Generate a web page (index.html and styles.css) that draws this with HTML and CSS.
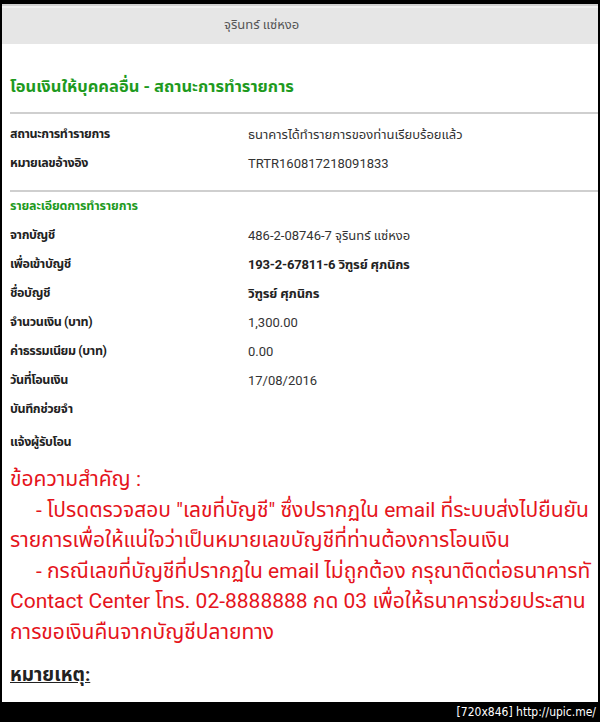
FILE: index.html
```html
<!DOCTYPE html>
<html lang="th">
<head>
<meta charset="utf-8">
<link rel="stylesheet" href="styles.css">
</head>
<body>
<div class="frame">
  <div class="topbar">
    <div class="topbar-title">จุรินทร์ แซ่หงอ</div>
  </div>
  <div class="content">
    <h1 class="page-title">โอนเงินให้บุคคลอื่น - สถานะการทำรายการ</h1>
    <div class="rule"></div>
    <div class="rows first">
      <div class="row"><span class="label">สถานะการทำรายการ</span><span class="value">ธนาคารได้ทำรายการของท่านเรียบร้อยแล้ว</span></div>
      <div class="row"><span class="label">หมายเลขอ้างอิง</span><span class="value">TRTR160817218091833</span></div>
    </div>
    <div class="rule"></div>
    <h2 class="section-title">รายละเอียดการทำรายการ</h2>
    <div class="rows">
      <div class="row"><span class="label">จากบัญชี</span><span class="value">486-2-08746-7 จุรินทร์ แซ่หงอ</span></div>
      <div class="row"><span class="label">เพื่อเข้าบัญชี</span><span class="value strong">193-2-67811-6 วิฑูรย์ ศุภนิกร</span></div>
      <div class="row"><span class="label">ชื่อบัญชี</span><span class="value strong">วิฑูรย์ ศุภนิกร</span></div>
      <div class="row"><span class="label">จำนวนเงิน (บาท)</span><span class="value">1,300.00</span></div>
      <div class="row"><span class="label">ค่าธรรมเนียม (บาท)</span><span class="value">0.00</span></div>
      <div class="row"><span class="label">วันที่โอนเงิน</span><span class="value">17/08/2016</span></div>
      <div class="row"><span class="label">บันทึกช่วยจำ</span><span class="value"></span></div>
      <div class="row tall"><span class="label">แจ้งผู้รับโอน</span><span class="value"></span></div>
    </div>
    <div class="notice">
      <p>ข้อความสำคัญ :</p>
      <p class="indent">- โปรดตรวจสอบ "เลขที่บัญชี" ซึ่งปรากฏใน email ที่ระบบส่งไปยืนยัน</p>
      <p>รายการเพื่อให้แน่ใจว่าเป็นหมายเลขบัญชีที่ท่านต้องการโอนเงิน</p>
      <p class="indent">- กรณีเลขที่บัญชีที่ปรากฏใน email ไม่ถูกต้อง กรุณาติดต่อธนาคารทั</p>
      <p>Contact Center โทร. 02-8888888 กด 03 เพื่อให้ธนาคารช่วยประสาน</p>
      <p>การขอเงินคืนจากบัญชีปลายทาง</p>
    </div>
    <div class="remark">หมายเหตุ:</div>
  </div>
</div>
<div class="footer">[720x846] http://upic.me/</div>
</body>
</html>
```
FILE: styles.css
```css
html, body {
  margin: 0;
  padding: 0;
  background: #000;
  width: 600px;
  height: 722px;
  overflow: hidden;
}
body {
  font-family: "Roboto", "Noto Sans", "Noto Sans Thai", sans-serif;
  color: #222;
}
.frame {
  margin: 4px 2px 0 2px;
  height: 698px;
  background: #fff;
  overflow: hidden;
}
.topbar {
  display: flex;
  height: 38px;
  background: #e6e6e6;
  border-top: 2px solid #d0d0d0;
  box-shadow: inset 0 2px 0 #f0f0f0;
  align-items: center;
}
.topbar-title {
  padding-left: 222px;
  font-size: 13px;
  color: #555;
}
.content {
  padding-left: 8px;
}
.page-title {
  margin: 30px 0 0 0;
  font-size: 16.5px;
  font-weight: bold;
  color: #1e9a1e;
  line-height: 26px;
}
.rule {
  height: 2px;
  background: #cfcfcf;
  margin-top: 12px;
}
.rows.first {
  padding: 6px 0 0;
}
.row {
  display: flex;
  height: 29px;
  align-items: center;
  font-size: 13px;
}
.row.tall {
  height: 36px;
}
.label {
  width: 238px;
  flex: none;
  font-size: 12.5px;
  font-weight: bold;
  letter-spacing: -0.4px;
  color: #222;
}
.value {
  color: #333;
}
.value.strong {
  font-weight: bold;
  letter-spacing: -0.2px;
  color: #222;
}
.section-title {
  margin: 4px 0 5px;
  font-size: 12.5px;
  line-height: 20px;
  font-weight: bold;
  letter-spacing: -0.2px;
  color: #1e9a1e;
}
.notice {
  color: #e5141c;
  font-size: 21px;
  margin-top: 4px;
}
.notice p {
  margin: 0;
  line-height: 30.5px;
  white-space: nowrap;
}
.notice .indent {
  padding-left: 26px;
}
.remark {
  margin-top: 14px;
  font-size: 19px;
  font-weight: bold;
  text-decoration: underline;
  color: #222;
}
.footer {
  height: 20px;
  color: #fff;
  font-family: "DejaVu Sans Condensed", "DejaVu Sans", sans-serif;
  font-size: 12px;
  line-height: 20px;
  text-align: right;
  padding-right: 4px;
}
```
